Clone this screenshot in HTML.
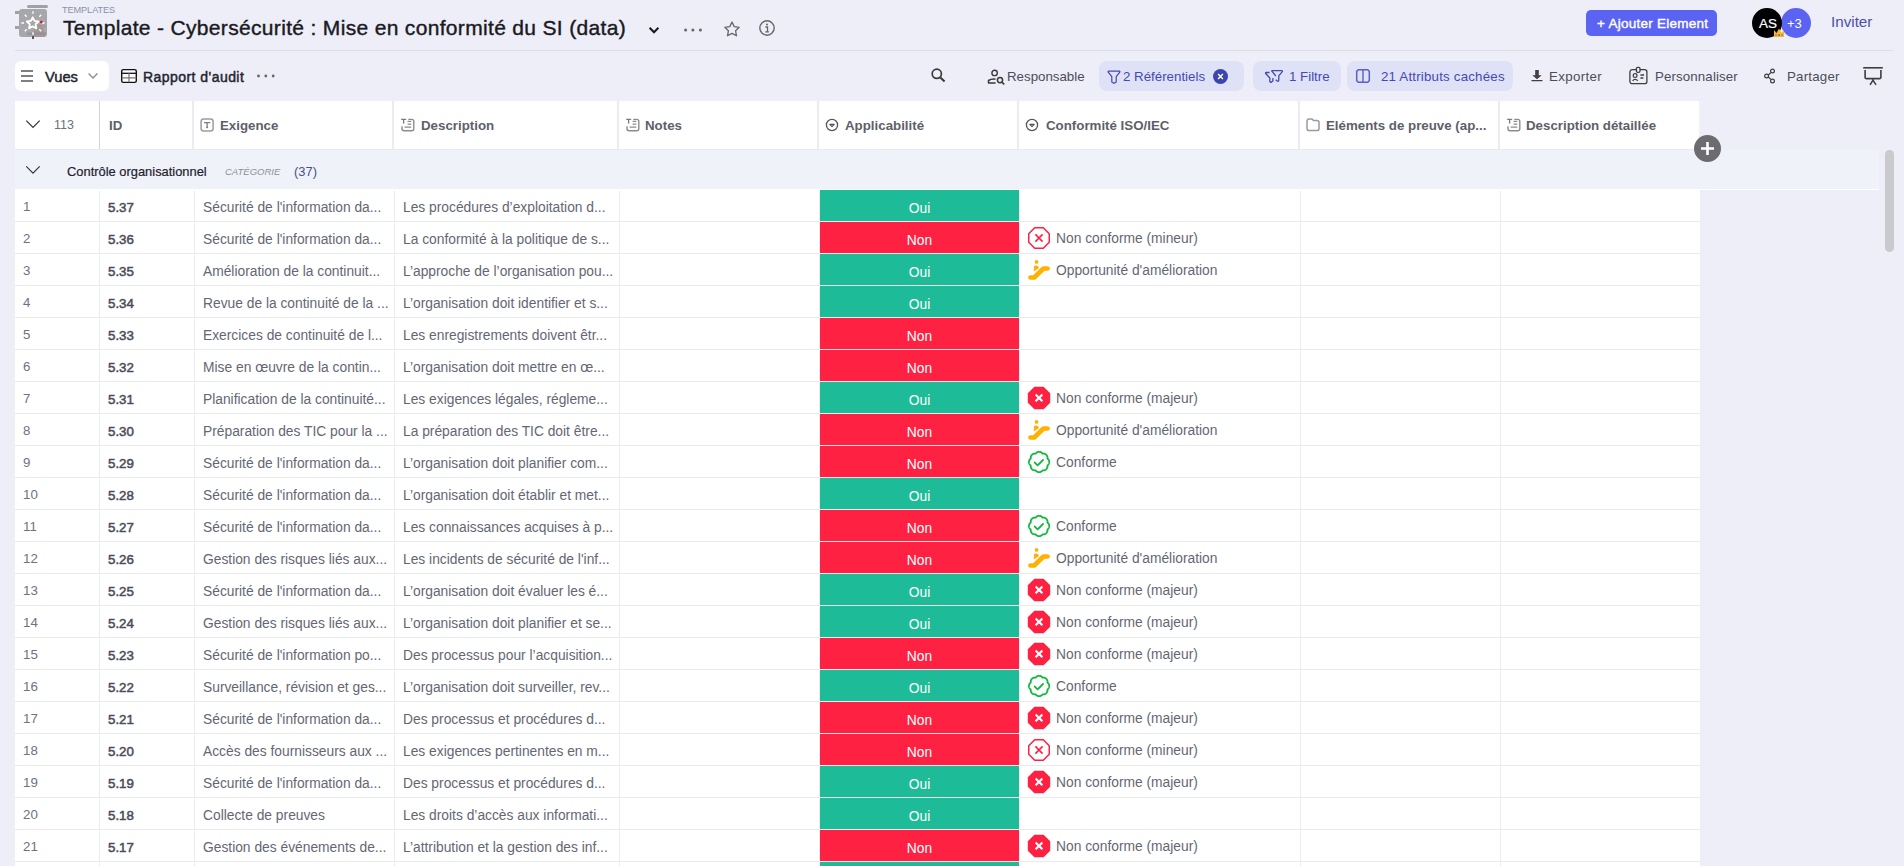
<!DOCTYPE html><html><head><meta charset="utf-8"><style>*{box-sizing:border-box;margin:0;padding:0}
html,body{width:1904px;height:866px;overflow:hidden}
body{background:#eeeef8;position:relative;font-family:"Liberation Sans",sans-serif;color:#1f2130}
.a{position:absolute;white-space:nowrap;line-height:1}
svg{display:block}
.sep{position:absolute;left:15px;top:50px;width:1878px;height:1px;background:#dddde8}
.chip{position:absolute;top:61px;height:30px;background:#dfe1f6;border-radius:8px}
.tb{font-size:13.3px;color:#4b4d58}
.ind{color:#4449b4}
/* table */
.hdr{position:absolute;left:15px;top:101px;width:1686px;height:48px;background:#fff}
.hb{position:absolute;top:101px;height:48px;width:1px;background:#ebebf4}
.hl{font-size:13.3px;font-weight:bold;color:#5d606e;top:120px}
.grp{position:absolute;left:15px;top:150px;width:1864px;height:39px;background:#eff2f8}
.rows{position:absolute;left:0;top:0}
.row{position:absolute;left:15px;width:1685px;height:32px;background:#fff;border-bottom:1px solid #e9e9f3}
.vb{position:absolute;top:190px;height:680px;width:1px;background:#ebebf4}
.c{position:absolute;white-space:nowrap;line-height:1;font-size:13.8px;color:#5e6170;top:10px}
.num{left:9px;font-size:13.3px;color:#6c6f7e}
.id{left:93px;font-weight:bold;font-size:13.3px;color:#44475a}
.ex{left:188px}
.de{left:388px;top:9.3px}
.app{position:absolute;left:805px;top:0;width:199px;height:31px;color:#fff;font-size:13.8px;line-height:32px;text-align:center}
.oui{background:#1dbb98}
.non{background:#ff2142}
.ci{position:absolute;left:1012px;top:4px;width:24px;height:24px}
.cf{left:1041px}

.ab{position:absolute}
.c{top:11px}
.de{top:11.3px}
.app{line-height:38px}
.hl{top:119px}
.num{left:8px}

.title{-webkit-text-stroke:0.4px #1a1a22}
.med{font-weight:normal !important;-webkit-text-stroke:0.45px #22242e}
.wstrip{position:absolute;left:15px;top:189px;width:1864px;height:1px;background:#fff}

.num{top:10px}
.id{top:10.5px}
.c.ex,.c.cf{top:10.6px}
.de{top:10.2px}
.app{line-height:37px}

.id{font-weight:normal;-webkit-text-stroke:0.5px #4a4c58;color:#4a4c58}
.hl{color:#5e5f6a}

.c{color:#646773}
.de{top:10.9px}

.c.num{color:#6e717f}
.c.id{color:#4a4c58}

.c.cf{top:10.1px}

.row{background-color:#fff;background-image:linear-gradient(#ebebf4,#ebebf4),linear-gradient(#ebebf4,#ebebf4),linear-gradient(#ebebf4,#ebebf4),linear-gradient(#ebebf4,#ebebf4),linear-gradient(#ebebf4,#ebebf4),linear-gradient(#ebebf4,#ebebf4),linear-gradient(#ebebf4,#ebebf4),linear-gradient(#ebebf4,#ebebf4),linear-gradient(#ebebf4,#ebebf4);background-position:84px 1px,179px 1px,379px 1px,604px 1px,804px 1px,1004px 1px,1285px 1px,1485px 1px,1685px 1px;background-size:1px 31px;background-repeat:no-repeat}
</style></head><body>
<!-- app icon -->
<div style="position:absolute;left:27px;top:5px;width:21px;height:3px;background:#a0a0a8;border-radius:2px;filter:blur(0.5px)"></div>
<div style="position:absolute;left:15px;top:11px;width:8px;height:2.5px;background:#a0a0a8;filter:blur(0.5px)"></div>
<div style="position:absolute;left:15px;top:26px;width:10px;height:2.5px;background:#a0a0a8;filter:blur(0.5px)"></div>
<div style="position:absolute;left:19px;top:9px;width:28px;height:28px;background:#a6a6ab;border-radius:3px;overflow:hidden">
<svg width="28" height="28" viewBox="0 0 28 28" style="position:absolute;left:0;top:0">
<path d="M17 14c4 0 8 4 9 14H15c-1-4 0-12 2-14z" fill="#a88a80" opacity=".55"/>
<rect x="8" y="23.5" width="19" height="2.5" fill="#8e8e96" opacity=".7"/>
<rect x="10" y="16" width="17" height="2" fill="#9a9aa2" opacity=".6"/>
<path d="M13.7 8.3l1.8 3.6 4 .6-2.9 2.8.7 4-3.6-1.9-3.6 1.9.7-4-2.9-2.8 4-.6z" fill="none" stroke="#fff" stroke-width="1.9" stroke-linejoin="round"/>
<g stroke="#fff" stroke-width="1.4"><path d="M14 2.2v2.6M14 23.2v2.6M2.4 14h2.6M23 14h2.6M5.8 5.8l1.9 1.9M20.3 20.3l1.9 1.9M22.2 5.8l-1.9 1.9M7.7 20.3l-1.9 1.9"/></g>
<circle cx="22.3" cy="13" r="1.3" fill="#d01818"/>
</svg></div>
<div style="position:absolute;left:32px;top:36px;width:2px;height:3px;background:#555;filter:blur(0.4px)"></div>
<div class="a" style="left:62px;top:5.9px;font-size:9.2px;letter-spacing:-0.1px;color:#8a90aa">TEMPLATES</div>
<div class="a title" style="left:63px;top:17.2px;font-size:21px;color:#1a1a22;letter-spacing:0.33px">Template - Cybersécurité : Mise en conformité du SI (data)</div>
<svg class="ab" style="left:646px;top:22px" width="16" height="16" viewBox="0 0 16 16"><path d="M3.6 5.8l4.4 4.5 4.4-4.5" fill="none" stroke="#1a1a1a" stroke-width="2"/></svg>
<svg class="ab" style="left:682px;top:27px" width="22" height="6" viewBox="0 0 22 6"><circle cx="3.6" cy="3" r="1.5" fill="#666"/><circle cx="10.9" cy="3" r="1.5" fill="#666"/><circle cx="18.4" cy="3" r="1.5" fill="#666"/></svg>
<svg class="ab" style="left:722px;top:20px" width="20" height="18" viewBox="0 0 20 18"><path d="M10 2l2.2 4.6 5 .7-3.6 3.5.9 5-4.5-2.4-4.5 2.4.9-5L2.8 7.3l5-.7z" fill="none" stroke="#666" stroke-width="1.3" stroke-linejoin="round"/></svg>
<svg class="ab" style="left:758px;top:19px" width="18" height="18" viewBox="0 0 18 18"><circle cx="9" cy="9" r="7.2" fill="none" stroke="#666" stroke-width="1.4"/><circle cx="9" cy="5.6" r="1" fill="#666"/><path d="M7.4 8h2.1v4.6M7.3 12.8h3.6" fill="none" stroke="#666" stroke-width="1.3"/></svg>
<div class="sep"></div>
<!-- top right -->
<div style="position:absolute;left:1586px;top:10px;width:131px;height:26px;background:#5b63f2;border-radius:5px"></div>
<div class="a" style="left:1597px;top:16.5px;font-size:13.5px;letter-spacing:0.25px;color:#fff;-webkit-text-stroke:0.4px #fff">+ Ajouter Element</div>
<div style="position:absolute;left:1781px;top:8px;width:30px;height:30px;background:#5b63f2;border-radius:50%"></div>
<div style="position:absolute;left:1752px;top:8px;width:30px;height:30px;background:#000;border-radius:50%"></div>
<div class="a" style="left:1759px;top:17px;font-size:13.5px;color:#fff;-webkit-text-stroke:0.2px #fff">AS</div>
<div class="a" style="left:1787px;top:17px;font-size:13px;color:#fff">+3</div>
<svg class="ab" style="left:1773px;top:27px;z-index:3" width="12" height="11" viewBox="0 0 12 11"><path d="M1 3l2.5 3L6 1.5 8.5 6 11 3v7H1z" fill="#f5b82e"/><circle cx="6" cy="8" r="1" fill="#2a9d4a"/><circle cx="3" cy="8" r=".8" fill="#c03cc0"/><circle cx="9" cy="8" r=".8" fill="#c03cc0"/></svg>
<div class="a" style="left:1831px;top:14px;font-size:15.2px;color:#4a50a8">Inviter</div>
<!-- toolbar -->
<div style="position:absolute;left:15px;top:61px;width:94px;height:30px;background:#fff;border-radius:6px"></div>
<svg class="ab" style="left:20px;top:69px" width="14" height="14" viewBox="0 0 14 14"><path d="M1 2h12M1 7h12M1 12h12" stroke="#555" stroke-width="1.4"/></svg>
<div class="a med" style="left:45px;top:70px;font-size:14.7px;color:#22242e">Vues</div>
<svg class="ab" style="left:87px;top:71px" width="12" height="10" viewBox="0 0 12 10"><path d="M1.6 2.6l4.4 4.4 4.4-4.4" fill="none" stroke="#8a8d9c" stroke-width="1.4"/></svg>
<svg class="ab" style="left:120px;top:68px" width="18" height="16" viewBox="0 0 18 16"><rect x="1.7" y="1.6" width="14.6" height="12.8" rx="1.6" fill="#fff" stroke="#111" stroke-width="1.4"/><path d="M1.7 5.3h14.6" stroke="#111" stroke-width="1.3"/><path d="M9 5.3v9M1.7 9.8h14.6" stroke="#777" stroke-width="1.2"/></svg>
<div class="a med" style="left:143px;top:70px;font-size:14px;letter-spacing:0.45px;color:#22242e">Rapport d'audit</div>
<svg class="ab" style="left:256px;top:73px" width="20" height="6" viewBox="0 0 20 6"><circle cx="2.5" cy="3" r="1.4" fill="#666"/><circle cx="9.8" cy="3" r="1.4" fill="#666"/><circle cx="17.2" cy="3" r="1.4" fill="#666"/></svg>
<svg class="ab" style="left:929px;top:67px" width="18" height="18" viewBox="0 0 18 18"><circle cx="7.8" cy="6.8" r="4.6" fill="none" stroke="#3a3a3a" stroke-width="1.7"/><path d="M11.3 10.5l4.3 4" stroke="#3a3a3a" stroke-width="2.1"/></svg>
<svg class="ab" style="left:986px;top:68px" width="20" height="18" viewBox="0 0 20 18"><circle cx="8.6" cy="4.9" r="2.7" fill="none" stroke="#3a3a3a" stroke-width="1.4"/><path d="M9.5 11.2c-2.8-.3-5.6.4-7 1.3v2.5H9.6" fill="none" stroke="#3a3a3a" stroke-width="1.5" stroke-linejoin="round"/><circle cx="14" cy="12.1" r="2.6" fill="none" stroke="#3a3a3a" stroke-width="1.5"/><path d="M15.9 14.2l2.4 2.3" stroke="#3a3a3a" stroke-width="1.7"/></svg>
<div class="a tb" style="left:1007px;top:69.7px">Responsable</div>
<div class="chip" style="left:1099px;width:145px"></div>
<svg class="ab" style="left:1107px;top:69px" width="14" height="15" viewBox="0 0 14 15"><path d="M1.6 2.2h10.8c.5 0 .7.5.4.9L9.2 7.7v5.2l-1.6 1.2H6.4l-1.6-1.2V7.7L1.2 3.1c-.3-.4-.1-.9.4-.9z" fill="none" stroke="#4449b4" stroke-width="1.2" stroke-linejoin="round"/></svg>
<div class="a tb ind" style="left:1123px;top:69.7px">2 Référentiels</div>
<svg class="ab" style="left:1212px;top:68px" width="17" height="17" viewBox="0 0 17 17"><circle cx="8.5" cy="8.5" r="7.5" fill="#3c44b0"/><path d="M6.1 6.1l4.8 4.8M10.9 6.1l-4.8 4.8" stroke="#fff" stroke-width="1.4"/></svg>
<div class="chip" style="left:1253px;width:88px"></div>
<svg class="ab" style="left:1264px;top:68px" width="20" height="16" viewBox="0 0 20 16"><path d="M7.5 2.6h10.3c.6 0 .8.6.5 1l-3.5 4.3v4.5c0 .8-.9 1.2-1.5.7l-1.6-1.3" fill="none" stroke="#4449b4" stroke-width="1.3" stroke-linejoin="round"/><path d="M7.5 2.6l4.3 5.4M5.5 4.5H2.2c-.6 0-.8.6-.5 1L5.8 10v3.3c0 .8.8 1.2 1.5.8l1.6-1.1V10" fill="none" stroke="#4449b4" stroke-width="1.3" stroke-linejoin="round"/></svg>
<div class="a tb ind" style="left:1289px;top:69.7px">1 Filtre</div>
<div class="chip" style="left:1347px;width:166px"></div>
<svg class="ab" style="left:1355px;top:68px" width="16" height="16" viewBox="0 0 16 16"><path d="M3.3 1.8h9.4l1.6 1.6v9.2l-1.6 1.6H3.3l-1.6-1.6V3.4z" fill="none" stroke="#5a60c4" stroke-width="1.5"/><path d="M8 1.8v12.4" stroke="#5a60c4" stroke-width="1.4"/></svg>
<div class="a tb ind" style="left:1381px;top:69.7px;letter-spacing:0.2px">21 Attributs cachées</div>
<svg class="ab" style="left:1531px;top:69px" width="12" height="13" viewBox="0 0 12 13"><path d="M4.2 1h3.6v5.2h2.9L6 10.2 1.3 6.2h2.9z" fill="#404040"/><path d="M1 11.6h10" stroke="#404040" stroke-width="1.4" stroke-linecap="round"/></svg>
<div class="a tb" style="left:1549px;top:69.7px;letter-spacing:0.35px">Exporter</div>
<svg class="ab" style="left:1628px;top:66px" width="20" height="19" viewBox="0 0 20 19"><rect x="1.9" y="3.7" width="17" height="14" rx="2.2" fill="none" stroke="#3e3e3e" stroke-width="1.3"/><rect x="8.4" y="1.3" width="3.6" height="5" rx="1.3" fill="#eeeef8" stroke="#3e3e3e" stroke-width="1.3"/><circle cx="7.1" cy="9.6" r="1.9" fill="none" stroke="#3e3e3e" stroke-width="1.2"/><path d="M4.6 14.8c1.2-1.8 3.9-1.8 5.1 0" fill="none" stroke="#3e3e3e" stroke-width="1.2"/><path d="M12.4 9h3.7M12.4 12h3" stroke="#3e3e3e" stroke-width="1.3"/></svg>
<div class="a tb" style="left:1655px;top:69.7px;letter-spacing:0.12px">Personnaliser</div>
<svg class="ab" style="left:1763px;top:67px" width="14" height="18" viewBox="0 0 14 18"><circle cx="9.5" cy="4" r="1.9" fill="none" stroke="#3e3e3e" stroke-width="1.2"/><circle cx="3.6" cy="9" r="1.9" fill="none" stroke="#3e3e3e" stroke-width="1.2"/><circle cx="9.5" cy="14" r="1.9" fill="none" stroke="#3e3e3e" stroke-width="1.2"/><path d="M5.3 8l2.6-2.4M5.3 10l2.6 2.4" stroke="#3e3e3e" stroke-width="1.2"/></svg>
<div class="a tb" style="left:1787px;top:69.7px;letter-spacing:0.2px">Partager</div>
<svg class="ab" style="left:1862px;top:66px" width="22" height="20" viewBox="0 0 22 20"><path d="M1.2 1.8h19.6" stroke="#3e3e3e" stroke-width="1.6"/><path d="M3.1 4v7.6c0 .6.4 1 1 1h13.8c.6 0 1-.4 1-1V4" fill="none" stroke="#3e3e3e" stroke-width="1.6"/><path d="M11 12.6v1.6L8 18.8M11 14.2l3 4.6" fill="none" stroke="#3e3e3e" stroke-width="1.5"/></svg>
<!-- header -->
<div class="hdr"></div>
<div class="hb" style="left:99px;background:#d3d3da"></div>
<div class="hb" style="left:192px;width:2px"></div>
<div class="hb" style="left:392px;width:2px"></div>
<div class="hb" style="left:617px;width:2px"></div>
<div class="hb" style="left:817px;width:2px"></div>
<div class="hb" style="left:1017px;width:2px"></div>
<div class="hb" style="left:1298px;width:2px"></div>
<div class="hb" style="left:1498px;width:2px"></div>
<div class="hb" style="left:1699px;width:2px;background:#f0f0f8"></div><div style="position:absolute;left:15px;top:149px;width:1686px;height:1px;background:#e9e9f4"></div>
<svg class="ab" style="left:25px;top:117px" width="16" height="14" viewBox="0 0 16 14"><path d="M1.3 3.6L8 10.3l6.7-6.7" fill="none" stroke="#333" stroke-width="1.2"/></svg>
<div class="a" style="left:54px;top:119px;font-size:12.5px;color:#6c6f7e">113</div>
<div class="a hl" style="left:109px">ID</div>
<svg class="ab" style="left:199px;top:117px" width="16" height="16" viewBox="0 0 16 16"><rect x="2.1" y="2.1" width="12" height="12" rx="2.5" fill="none" stroke="#9c9ca2" stroke-width="1.5"/><path d="M5.6 6.3V5.6h5v.7M8.1 5.6v5" fill="none" stroke="#7b7b80" stroke-width="1.3"/><path d="M7.1 10.6h2" stroke="#7b7b80" stroke-width="1.1"/></svg>
<div class="a hl" style="left:220px">Exigence</div>
<svg class="ab" style="left:400px;top:117px" width="16" height="16" viewBox="0 0 16 16"><path d="M1.5 2.6V2.4h4.3v.2M3.6 2.4v3.6M2.9 6h1.4" fill="none" stroke="#777" stroke-width="1.2"/><path d="M8.3 2.4h3.5c1.1 0 2 .9 2 2V11.7c0 1.1-.9 2-2 2H4c-1.1 0-2-.9-2-2V9.3" fill="none" stroke="#8c8c90" stroke-width="1.4"/><path d="M7.6 4.4h3.7M7.6 7.1h3.7M4.6 10.2h6.7" stroke="#8c8c90" stroke-width="1.2"/></svg>
<div class="a hl" style="left:421px">Description</div>
<svg class="ab" style="left:625px;top:117px" width="16" height="16" viewBox="0 0 16 16"><path d="M1.5 2.6V2.4h4.3v.2M3.6 2.4v3.6M2.9 6h1.4" fill="none" stroke="#777" stroke-width="1.2"/><path d="M8.3 2.4h3.5c1.1 0 2 .9 2 2V11.7c0 1.1-.9 2-2 2H4c-1.1 0-2-.9-2-2V9.3" fill="none" stroke="#8c8c90" stroke-width="1.4"/><path d="M7.6 4.4h3.7M7.6 7.1h3.7M4.6 10.2h6.7" stroke="#8c8c90" stroke-width="1.2"/></svg>
<div class="a hl" style="left:645px">Notes</div>
<svg class="ab" style="left:824px;top:117px" width="16" height="16" viewBox="0 0 16 16"><circle cx="8" cy="8" r="5.6" fill="none" stroke="#555" stroke-width="1.3"/><path d="M5.8 7.4h4.4L8 9.6z" fill="none" stroke="#555" stroke-width="1.2" stroke-linejoin="round"/></svg>
<div class="a hl" style="left:845px">Applicabilité</div>
<svg class="ab" style="left:1024px;top:117px" width="16" height="16" viewBox="0 0 16 16"><circle cx="8" cy="8" r="5.6" fill="none" stroke="#555" stroke-width="1.3"/><path d="M5.8 7.4h4.4L8 9.6z" fill="none" stroke="#555" stroke-width="1.2" stroke-linejoin="round"/></svg>
<div class="a hl" style="left:1046px">Conformité ISO/IEC</div>
<svg class="ab" style="left:1305px;top:117px" width="16" height="16" viewBox="0 0 16 16"><path d="M2 4.3c0-1.2.9-2.2 2.1-2.2h2.3c.8 0 1.3.4 1.7 1.1l.3.4h3.5c1.2 0 2.1.9 2.1 2.1v5.8c0 1.2-.9 2.1-2.1 2.1H4.1C2.9 13.6 2 12.7 2 11.5z" fill="none" stroke="#9a9a9e" stroke-width="1.5"/></svg>
<div class="a hl" style="left:1326px">Eléments de preuve (ap...</div>
<svg class="ab" style="left:1506px;top:117px" width="16" height="16" viewBox="0 0 16 16"><path d="M1.5 2.6V2.4h4.3v.2M3.6 2.4v3.6M2.9 6h1.4" fill="none" stroke="#777" stroke-width="1.2"/><path d="M8.3 2.4h3.5c1.1 0 2 .9 2 2V11.7c0 1.1-.9 2-2 2H4c-1.1 0-2-.9-2-2V9.3" fill="none" stroke="#8c8c90" stroke-width="1.4"/><path d="M7.6 4.4h3.7M7.6 7.1h3.7M4.6 10.2h6.7" stroke="#8c8c90" stroke-width="1.2"/></svg>
<div class="a hl" style="left:1526px">Description détaillée</div>
<!-- group row -->
<div class="grp"></div><div class="wstrip"></div>
<svg class="ab" style="left:25px;top:163px" width="16" height="14" viewBox="0 0 16 14"><path d="M1.3 3.4L8 10.1l6.7-6.7" fill="none" stroke="#333" stroke-width="1.2"/></svg>
<div class="a" style="left:67px;top:165.5px;font-size:12.9px;color:#1f2130;-webkit-text-stroke:0.2px #1f2130">Contrôle organisationnel</div>
<div class="a" style="left:225px;top:166.5px;font-size:9.5px;font-style:italic;color:#8c8f9c">CATÉGORIE</div>
<div class="a" style="left:294px;top:165.5px;font-size:12.9px;color:#4a4f8a">(37)</div>
<!-- plus and scrollbar -->
<div style="position:absolute;left:1694px;top:135px;width:27px;height:27px;border-radius:50%;background:#6b6b70;z-index:5"></div>
<svg class="ab" style="left:1694px;top:135px;z-index:6" width="27" height="27" viewBox="0 0 27 27"><path d="M13.5 7v13M7 13.5h13" stroke="#fff" stroke-width="2.6"/></svg>
<div style="position:absolute;left:1885px;top:150px;width:9px;height:102px;border-radius:5px;background:#c9c9ce"></div>

<div class="rows">
<div class="row" style="top:190px"><span class="c num">1</span><span class="c id">5.37</span><span class="c ex">Sécurité de l'information da...</span><span class="c de">Les procédures d’exploitation d...</span><span class="app oui">Oui</span></div>
<div class="row" style="top:222px"><span class="c num">2</span><span class="c id">5.36</span><span class="c ex">Sécurité de l'information da...</span><span class="c de">La conformité à la politique de s...</span><span class="app non">Non</span><span class="ci"><svg width="24" height="24" viewBox="0 0 24 24"><path d="M7.75 1.75h8.5l6 6v8.5l-6 6h-8.5l-6-6v-8.5z" fill="none" stroke="#ff2142" stroke-width="1.5"/><path d="M8.4 8.4l7.2 7.2M15.6 8.4l-7.2 7.2" stroke="#ff2142" stroke-width="1.6"/></svg></span><span class="c cf">Non conforme (mineur)</span></div>
<div class="row" style="top:254px"><span class="c num">3</span><span class="c id">5.35</span><span class="c ex">Amélioration de la continuit...</span><span class="c de">L’approche de l’organisation pou...</span><span class="app oui">Oui</span><span class="ci"><svg width="24" height="24" viewBox="0 0 24 24"><circle cx="9.6" cy="3.9" r="1.85" fill="#ffb000"/><path d="M6.9 13.6V8.9C6.9 7.9 7.9 7.3 8.9 7.4 10.6 7.6 11.9 8.6 11.9 9.9z" fill="#ffb000"/><path d="M3.4 19.5h3.8l9.3-9h4.1" fill="none" stroke="#ffb000" stroke-width="4.6" stroke-linecap="round" stroke-linejoin="round"/></svg></span><span class="c cf">Opportunité d'amélioration</span></div>
<div class="row" style="top:286px"><span class="c num">4</span><span class="c id">5.34</span><span class="c ex">Revue de la continuité de la ...</span><span class="c de">L’organisation doit identifier et s...</span><span class="app oui">Oui</span></div>
<div class="row" style="top:318px"><span class="c num">5</span><span class="c id">5.33</span><span class="c ex">Exercices de continuité de l...</span><span class="c de">Les enregistrements doivent êtr...</span><span class="app non">Non</span></div>
<div class="row" style="top:350px"><span class="c num">6</span><span class="c id">5.32</span><span class="c ex">Mise en œuvre de la contin...</span><span class="c de">L’organisation doit mettre en œ...</span><span class="app non">Non</span></div>
<div class="row" style="top:382px"><span class="c num">7</span><span class="c id">5.31</span><span class="c ex">Planification de la continuité...</span><span class="c de">Les exigences légales, régleme...</span><span class="app oui">Oui</span><span class="ci"><svg width="24" height="24" viewBox="0 0 24 24"><path d="M7.36 0.8h9.28l6.56 6.56v9.28l-6.56 6.56h-9.28l-6.56-6.56v-9.28z" fill="#ff2142"/><path d="M8.6 8.5l6.8 6.8M15.4 8.5l-6.8 6.8" stroke="#fff" stroke-width="2.1"/></svg></span><span class="c cf">Non conforme (majeur)</span></div>
<div class="row" style="top:414px"><span class="c num">8</span><span class="c id">5.30</span><span class="c ex">Préparation des TIC pour la ...</span><span class="c de">La préparation des TIC doit être...</span><span class="app non">Non</span><span class="ci"><svg width="24" height="24" viewBox="0 0 24 24"><circle cx="9.6" cy="3.9" r="1.85" fill="#ffb000"/><path d="M6.9 13.6V8.9C6.9 7.9 7.9 7.3 8.9 7.4 10.6 7.6 11.9 8.6 11.9 9.9z" fill="#ffb000"/><path d="M3.4 19.5h3.8l9.3-9h4.1" fill="none" stroke="#ffb000" stroke-width="4.6" stroke-linecap="round" stroke-linejoin="round"/></svg></span><span class="c cf">Opportunité d'amélioration</span></div>
<div class="row" style="top:446px"><span class="c num">9</span><span class="c id">5.29</span><span class="c ex">Sécurité de l'information da...</span><span class="c de">L’organisation doit planifier com...</span><span class="app non">Non</span><span class="ci"><svg width="24" height="24" viewBox="0 0 24 24"><path d="M22.25,12.00 L22.24,12.27 L22.22,12.53 L22.17,12.79 L22.11,13.05 L22.04,13.31 L21.95,13.56 L21.84,13.81 L21.72,14.04 L21.58,14.28 L21.43,14.50 L21.27,14.72 L21.09,14.92 L20.89,15.11 L20.68,15.29 L20.41,15.44 L20.49,15.74 L20.52,16.02 L20.52,16.29 L20.50,16.56 L20.47,16.83 L20.41,17.10 L20.35,17.36 L20.26,17.61 L20.17,17.86 L20.05,18.10 L19.93,18.34 L19.78,18.56 L19.63,18.78 L19.46,18.98 L19.28,19.18 L19.08,19.36 L18.88,19.53 L18.66,19.68 L18.44,19.83 L18.20,19.95 L17.96,20.07 L17.71,20.16 L17.46,20.25 L17.20,20.31 L16.93,20.37 L16.66,20.40 L16.39,20.42 L16.12,20.42 L15.84,20.39 L15.54,20.31 L15.39,20.58 L15.21,20.79 L15.02,20.99 L14.82,21.17 L14.60,21.33 L14.38,21.48 L14.14,21.62 L13.91,21.74 L13.66,21.85 L13.41,21.94 L13.15,22.01 L12.89,22.07 L12.63,22.12 L12.37,22.14 L12.10,22.15 L11.83,22.14 L11.57,22.12 L11.31,22.07 L11.05,22.01 L10.79,21.94 L10.54,21.85 L10.29,21.74 L10.06,21.62 L9.82,21.48 L9.60,21.33 L9.38,21.17 L9.18,20.99 L8.99,20.79 L8.81,20.58 L8.66,20.31 L8.36,20.39 L8.08,20.42 L7.81,20.42 L7.54,20.40 L7.27,20.37 L7.00,20.31 L6.74,20.25 L6.49,20.16 L6.24,20.07 L6.00,19.95 L5.76,19.83 L5.54,19.68 L5.32,19.53 L5.12,19.36 L4.92,19.18 L4.74,18.98 L4.57,18.78 L4.42,18.56 L4.27,18.34 L4.15,18.10 L4.03,17.86 L3.94,17.61 L3.85,17.36 L3.79,17.10 L3.73,16.83 L3.70,16.56 L3.68,16.29 L3.68,16.02 L3.71,15.74 L3.79,15.44 L3.52,15.29 L3.31,15.11 L3.11,14.92 L2.93,14.72 L2.77,14.50 L2.62,14.28 L2.48,14.04 L2.36,13.81 L2.25,13.56 L2.16,13.31 L2.09,13.05 L2.03,12.79 L1.98,12.53 L1.96,12.27 L1.95,12.00 L1.96,11.73 L1.98,11.47 L2.03,11.21 L2.09,10.95 L2.16,10.69 L2.25,10.44 L2.36,10.19 L2.48,9.96 L2.62,9.72 L2.77,9.50 L2.93,9.28 L3.11,9.08 L3.31,8.89 L3.52,8.71 L3.79,8.56 L3.71,8.26 L3.68,7.98 L3.68,7.71 L3.70,7.44 L3.73,7.17 L3.79,6.90 L3.85,6.64 L3.94,6.39 L4.03,6.14 L4.15,5.90 L4.27,5.66 L4.42,5.44 L4.57,5.22 L4.74,5.02 L4.92,4.82 L5.12,4.64 L5.32,4.47 L5.54,4.32 L5.76,4.17 L6.00,4.05 L6.24,3.93 L6.49,3.84 L6.74,3.75 L7.00,3.69 L7.27,3.63 L7.54,3.60 L7.81,3.58 L8.08,3.58 L8.36,3.61 L8.66,3.69 L8.81,3.42 L8.99,3.21 L9.18,3.01 L9.38,2.83 L9.60,2.67 L9.82,2.52 L10.06,2.38 L10.29,2.26 L10.54,2.15 L10.79,2.06 L11.05,1.99 L11.31,1.93 L11.57,1.88 L11.83,1.86 L12.10,1.85 L12.37,1.86 L12.63,1.88 L12.89,1.93 L13.15,1.99 L13.41,2.06 L13.66,2.15 L13.91,2.26 L14.14,2.38 L14.38,2.52 L14.60,2.67 L14.82,2.83 L15.02,3.01 L15.21,3.21 L15.39,3.42 L15.54,3.69 L15.84,3.61 L16.12,3.58 L16.39,3.58 L16.66,3.60 L16.93,3.63 L17.20,3.69 L17.46,3.75 L17.71,3.84 L17.96,3.93 L18.20,4.05 L18.44,4.17 L18.66,4.32 L18.88,4.47 L19.08,4.64 L19.28,4.82 L19.46,5.02 L19.63,5.22 L19.78,5.44 L19.93,5.66 L20.05,5.90 L20.17,6.14 L20.26,6.39 L20.35,6.64 L20.41,6.90 L20.47,7.17 L20.50,7.44 L20.52,7.71 L20.52,7.98 L20.49,8.26 L20.41,8.56 L20.68,8.71 L20.89,8.89 L21.09,9.08 L21.27,9.28 L21.43,9.50 L21.58,9.72 L21.72,9.96 L21.84,10.19 L21.95,10.44 L22.04,10.69 L22.11,10.95 L22.17,11.21 L22.22,11.47 L22.24,11.73Z" fill="none" stroke="#12b83e" stroke-width="1.8" stroke-linejoin="round"/><path d="M7.6 12.4l3 3 5.4-5.4" fill="none" stroke="#12b83e" stroke-width="1.8" stroke-linecap="round" stroke-linejoin="round"/></svg></span><span class="c cf">Conforme</span></div>
<div class="row" style="top:478px"><span class="c num">10</span><span class="c id">5.28</span><span class="c ex">Sécurité de l'information da...</span><span class="c de">L’organisation doit établir et met...</span><span class="app oui">Oui</span></div>
<div class="row" style="top:510px"><span class="c num">11</span><span class="c id">5.27</span><span class="c ex">Sécurité de l'information da...</span><span class="c de">Les connaissances acquises à p...</span><span class="app non">Non</span><span class="ci"><svg width="24" height="24" viewBox="0 0 24 24"><path d="M22.25,12.00 L22.24,12.27 L22.22,12.53 L22.17,12.79 L22.11,13.05 L22.04,13.31 L21.95,13.56 L21.84,13.81 L21.72,14.04 L21.58,14.28 L21.43,14.50 L21.27,14.72 L21.09,14.92 L20.89,15.11 L20.68,15.29 L20.41,15.44 L20.49,15.74 L20.52,16.02 L20.52,16.29 L20.50,16.56 L20.47,16.83 L20.41,17.10 L20.35,17.36 L20.26,17.61 L20.17,17.86 L20.05,18.10 L19.93,18.34 L19.78,18.56 L19.63,18.78 L19.46,18.98 L19.28,19.18 L19.08,19.36 L18.88,19.53 L18.66,19.68 L18.44,19.83 L18.20,19.95 L17.96,20.07 L17.71,20.16 L17.46,20.25 L17.20,20.31 L16.93,20.37 L16.66,20.40 L16.39,20.42 L16.12,20.42 L15.84,20.39 L15.54,20.31 L15.39,20.58 L15.21,20.79 L15.02,20.99 L14.82,21.17 L14.60,21.33 L14.38,21.48 L14.14,21.62 L13.91,21.74 L13.66,21.85 L13.41,21.94 L13.15,22.01 L12.89,22.07 L12.63,22.12 L12.37,22.14 L12.10,22.15 L11.83,22.14 L11.57,22.12 L11.31,22.07 L11.05,22.01 L10.79,21.94 L10.54,21.85 L10.29,21.74 L10.06,21.62 L9.82,21.48 L9.60,21.33 L9.38,21.17 L9.18,20.99 L8.99,20.79 L8.81,20.58 L8.66,20.31 L8.36,20.39 L8.08,20.42 L7.81,20.42 L7.54,20.40 L7.27,20.37 L7.00,20.31 L6.74,20.25 L6.49,20.16 L6.24,20.07 L6.00,19.95 L5.76,19.83 L5.54,19.68 L5.32,19.53 L5.12,19.36 L4.92,19.18 L4.74,18.98 L4.57,18.78 L4.42,18.56 L4.27,18.34 L4.15,18.10 L4.03,17.86 L3.94,17.61 L3.85,17.36 L3.79,17.10 L3.73,16.83 L3.70,16.56 L3.68,16.29 L3.68,16.02 L3.71,15.74 L3.79,15.44 L3.52,15.29 L3.31,15.11 L3.11,14.92 L2.93,14.72 L2.77,14.50 L2.62,14.28 L2.48,14.04 L2.36,13.81 L2.25,13.56 L2.16,13.31 L2.09,13.05 L2.03,12.79 L1.98,12.53 L1.96,12.27 L1.95,12.00 L1.96,11.73 L1.98,11.47 L2.03,11.21 L2.09,10.95 L2.16,10.69 L2.25,10.44 L2.36,10.19 L2.48,9.96 L2.62,9.72 L2.77,9.50 L2.93,9.28 L3.11,9.08 L3.31,8.89 L3.52,8.71 L3.79,8.56 L3.71,8.26 L3.68,7.98 L3.68,7.71 L3.70,7.44 L3.73,7.17 L3.79,6.90 L3.85,6.64 L3.94,6.39 L4.03,6.14 L4.15,5.90 L4.27,5.66 L4.42,5.44 L4.57,5.22 L4.74,5.02 L4.92,4.82 L5.12,4.64 L5.32,4.47 L5.54,4.32 L5.76,4.17 L6.00,4.05 L6.24,3.93 L6.49,3.84 L6.74,3.75 L7.00,3.69 L7.27,3.63 L7.54,3.60 L7.81,3.58 L8.08,3.58 L8.36,3.61 L8.66,3.69 L8.81,3.42 L8.99,3.21 L9.18,3.01 L9.38,2.83 L9.60,2.67 L9.82,2.52 L10.06,2.38 L10.29,2.26 L10.54,2.15 L10.79,2.06 L11.05,1.99 L11.31,1.93 L11.57,1.88 L11.83,1.86 L12.10,1.85 L12.37,1.86 L12.63,1.88 L12.89,1.93 L13.15,1.99 L13.41,2.06 L13.66,2.15 L13.91,2.26 L14.14,2.38 L14.38,2.52 L14.60,2.67 L14.82,2.83 L15.02,3.01 L15.21,3.21 L15.39,3.42 L15.54,3.69 L15.84,3.61 L16.12,3.58 L16.39,3.58 L16.66,3.60 L16.93,3.63 L17.20,3.69 L17.46,3.75 L17.71,3.84 L17.96,3.93 L18.20,4.05 L18.44,4.17 L18.66,4.32 L18.88,4.47 L19.08,4.64 L19.28,4.82 L19.46,5.02 L19.63,5.22 L19.78,5.44 L19.93,5.66 L20.05,5.90 L20.17,6.14 L20.26,6.39 L20.35,6.64 L20.41,6.90 L20.47,7.17 L20.50,7.44 L20.52,7.71 L20.52,7.98 L20.49,8.26 L20.41,8.56 L20.68,8.71 L20.89,8.89 L21.09,9.08 L21.27,9.28 L21.43,9.50 L21.58,9.72 L21.72,9.96 L21.84,10.19 L21.95,10.44 L22.04,10.69 L22.11,10.95 L22.17,11.21 L22.22,11.47 L22.24,11.73Z" fill="none" stroke="#12b83e" stroke-width="1.8" stroke-linejoin="round"/><path d="M7.6 12.4l3 3 5.4-5.4" fill="none" stroke="#12b83e" stroke-width="1.8" stroke-linecap="round" stroke-linejoin="round"/></svg></span><span class="c cf">Conforme</span></div>
<div class="row" style="top:542px"><span class="c num">12</span><span class="c id">5.26</span><span class="c ex">Gestion des risques liés aux...</span><span class="c de">Les incidents de sécurité de l'inf...</span><span class="app non">Non</span><span class="ci"><svg width="24" height="24" viewBox="0 0 24 24"><circle cx="9.6" cy="3.9" r="1.85" fill="#ffb000"/><path d="M6.9 13.6V8.9C6.9 7.9 7.9 7.3 8.9 7.4 10.6 7.6 11.9 8.6 11.9 9.9z" fill="#ffb000"/><path d="M3.4 19.5h3.8l9.3-9h4.1" fill="none" stroke="#ffb000" stroke-width="4.6" stroke-linecap="round" stroke-linejoin="round"/></svg></span><span class="c cf">Opportunité d'amélioration</span></div>
<div class="row" style="top:574px"><span class="c num">13</span><span class="c id">5.25</span><span class="c ex">Sécurité de l'information da...</span><span class="c de">L’organisation doit évaluer les é...</span><span class="app oui">Oui</span><span class="ci"><svg width="24" height="24" viewBox="0 0 24 24"><path d="M7.36 0.8h9.28l6.56 6.56v9.28l-6.56 6.56h-9.28l-6.56-6.56v-9.28z" fill="#ff2142"/><path d="M8.6 8.5l6.8 6.8M15.4 8.5l-6.8 6.8" stroke="#fff" stroke-width="2.1"/></svg></span><span class="c cf">Non conforme (majeur)</span></div>
<div class="row" style="top:606px"><span class="c num">14</span><span class="c id">5.24</span><span class="c ex">Gestion des risques liés aux...</span><span class="c de">L’organisation doit planifier et se...</span><span class="app oui">Oui</span><span class="ci"><svg width="24" height="24" viewBox="0 0 24 24"><path d="M7.36 0.8h9.28l6.56 6.56v9.28l-6.56 6.56h-9.28l-6.56-6.56v-9.28z" fill="#ff2142"/><path d="M8.6 8.5l6.8 6.8M15.4 8.5l-6.8 6.8" stroke="#fff" stroke-width="2.1"/></svg></span><span class="c cf">Non conforme (majeur)</span></div>
<div class="row" style="top:638px"><span class="c num">15</span><span class="c id">5.23</span><span class="c ex">Sécurité de l'information po...</span><span class="c de">Des processus pour l’acquisition...</span><span class="app non">Non</span><span class="ci"><svg width="24" height="24" viewBox="0 0 24 24"><path d="M7.36 0.8h9.28l6.56 6.56v9.28l-6.56 6.56h-9.28l-6.56-6.56v-9.28z" fill="#ff2142"/><path d="M8.6 8.5l6.8 6.8M15.4 8.5l-6.8 6.8" stroke="#fff" stroke-width="2.1"/></svg></span><span class="c cf">Non conforme (majeur)</span></div>
<div class="row" style="top:670px"><span class="c num">16</span><span class="c id">5.22</span><span class="c ex">Surveillance, révision et ges...</span><span class="c de">L’organisation doit surveiller, rev...</span><span class="app oui">Oui</span><span class="ci"><svg width="24" height="24" viewBox="0 0 24 24"><path d="M22.25,12.00 L22.24,12.27 L22.22,12.53 L22.17,12.79 L22.11,13.05 L22.04,13.31 L21.95,13.56 L21.84,13.81 L21.72,14.04 L21.58,14.28 L21.43,14.50 L21.27,14.72 L21.09,14.92 L20.89,15.11 L20.68,15.29 L20.41,15.44 L20.49,15.74 L20.52,16.02 L20.52,16.29 L20.50,16.56 L20.47,16.83 L20.41,17.10 L20.35,17.36 L20.26,17.61 L20.17,17.86 L20.05,18.10 L19.93,18.34 L19.78,18.56 L19.63,18.78 L19.46,18.98 L19.28,19.18 L19.08,19.36 L18.88,19.53 L18.66,19.68 L18.44,19.83 L18.20,19.95 L17.96,20.07 L17.71,20.16 L17.46,20.25 L17.20,20.31 L16.93,20.37 L16.66,20.40 L16.39,20.42 L16.12,20.42 L15.84,20.39 L15.54,20.31 L15.39,20.58 L15.21,20.79 L15.02,20.99 L14.82,21.17 L14.60,21.33 L14.38,21.48 L14.14,21.62 L13.91,21.74 L13.66,21.85 L13.41,21.94 L13.15,22.01 L12.89,22.07 L12.63,22.12 L12.37,22.14 L12.10,22.15 L11.83,22.14 L11.57,22.12 L11.31,22.07 L11.05,22.01 L10.79,21.94 L10.54,21.85 L10.29,21.74 L10.06,21.62 L9.82,21.48 L9.60,21.33 L9.38,21.17 L9.18,20.99 L8.99,20.79 L8.81,20.58 L8.66,20.31 L8.36,20.39 L8.08,20.42 L7.81,20.42 L7.54,20.40 L7.27,20.37 L7.00,20.31 L6.74,20.25 L6.49,20.16 L6.24,20.07 L6.00,19.95 L5.76,19.83 L5.54,19.68 L5.32,19.53 L5.12,19.36 L4.92,19.18 L4.74,18.98 L4.57,18.78 L4.42,18.56 L4.27,18.34 L4.15,18.10 L4.03,17.86 L3.94,17.61 L3.85,17.36 L3.79,17.10 L3.73,16.83 L3.70,16.56 L3.68,16.29 L3.68,16.02 L3.71,15.74 L3.79,15.44 L3.52,15.29 L3.31,15.11 L3.11,14.92 L2.93,14.72 L2.77,14.50 L2.62,14.28 L2.48,14.04 L2.36,13.81 L2.25,13.56 L2.16,13.31 L2.09,13.05 L2.03,12.79 L1.98,12.53 L1.96,12.27 L1.95,12.00 L1.96,11.73 L1.98,11.47 L2.03,11.21 L2.09,10.95 L2.16,10.69 L2.25,10.44 L2.36,10.19 L2.48,9.96 L2.62,9.72 L2.77,9.50 L2.93,9.28 L3.11,9.08 L3.31,8.89 L3.52,8.71 L3.79,8.56 L3.71,8.26 L3.68,7.98 L3.68,7.71 L3.70,7.44 L3.73,7.17 L3.79,6.90 L3.85,6.64 L3.94,6.39 L4.03,6.14 L4.15,5.90 L4.27,5.66 L4.42,5.44 L4.57,5.22 L4.74,5.02 L4.92,4.82 L5.12,4.64 L5.32,4.47 L5.54,4.32 L5.76,4.17 L6.00,4.05 L6.24,3.93 L6.49,3.84 L6.74,3.75 L7.00,3.69 L7.27,3.63 L7.54,3.60 L7.81,3.58 L8.08,3.58 L8.36,3.61 L8.66,3.69 L8.81,3.42 L8.99,3.21 L9.18,3.01 L9.38,2.83 L9.60,2.67 L9.82,2.52 L10.06,2.38 L10.29,2.26 L10.54,2.15 L10.79,2.06 L11.05,1.99 L11.31,1.93 L11.57,1.88 L11.83,1.86 L12.10,1.85 L12.37,1.86 L12.63,1.88 L12.89,1.93 L13.15,1.99 L13.41,2.06 L13.66,2.15 L13.91,2.26 L14.14,2.38 L14.38,2.52 L14.60,2.67 L14.82,2.83 L15.02,3.01 L15.21,3.21 L15.39,3.42 L15.54,3.69 L15.84,3.61 L16.12,3.58 L16.39,3.58 L16.66,3.60 L16.93,3.63 L17.20,3.69 L17.46,3.75 L17.71,3.84 L17.96,3.93 L18.20,4.05 L18.44,4.17 L18.66,4.32 L18.88,4.47 L19.08,4.64 L19.28,4.82 L19.46,5.02 L19.63,5.22 L19.78,5.44 L19.93,5.66 L20.05,5.90 L20.17,6.14 L20.26,6.39 L20.35,6.64 L20.41,6.90 L20.47,7.17 L20.50,7.44 L20.52,7.71 L20.52,7.98 L20.49,8.26 L20.41,8.56 L20.68,8.71 L20.89,8.89 L21.09,9.08 L21.27,9.28 L21.43,9.50 L21.58,9.72 L21.72,9.96 L21.84,10.19 L21.95,10.44 L22.04,10.69 L22.11,10.95 L22.17,11.21 L22.22,11.47 L22.24,11.73Z" fill="none" stroke="#12b83e" stroke-width="1.8" stroke-linejoin="round"/><path d="M7.6 12.4l3 3 5.4-5.4" fill="none" stroke="#12b83e" stroke-width="1.8" stroke-linecap="round" stroke-linejoin="round"/></svg></span><span class="c cf">Conforme</span></div>
<div class="row" style="top:702px"><span class="c num">17</span><span class="c id">5.21</span><span class="c ex">Sécurité de l'information da...</span><span class="c de">Des processus et procédures d...</span><span class="app non">Non</span><span class="ci"><svg width="24" height="24" viewBox="0 0 24 24"><path d="M7.36 0.8h9.28l6.56 6.56v9.28l-6.56 6.56h-9.28l-6.56-6.56v-9.28z" fill="#ff2142"/><path d="M8.6 8.5l6.8 6.8M15.4 8.5l-6.8 6.8" stroke="#fff" stroke-width="2.1"/></svg></span><span class="c cf">Non conforme (majeur)</span></div>
<div class="row" style="top:734px"><span class="c num">18</span><span class="c id">5.20</span><span class="c ex">Accès des fournisseurs aux ...</span><span class="c de">Les exigences pertinentes en m...</span><span class="app non">Non</span><span class="ci"><svg width="24" height="24" viewBox="0 0 24 24"><path d="M7.75 1.75h8.5l6 6v8.5l-6 6h-8.5l-6-6v-8.5z" fill="none" stroke="#ff2142" stroke-width="1.5"/><path d="M8.4 8.4l7.2 7.2M15.6 8.4l-7.2 7.2" stroke="#ff2142" stroke-width="1.6"/></svg></span><span class="c cf">Non conforme (mineur)</span></div>
<div class="row" style="top:766px"><span class="c num">19</span><span class="c id">5.19</span><span class="c ex">Sécurité de l'information da...</span><span class="c de">Des processus et procédures d...</span><span class="app oui">Oui</span><span class="ci"><svg width="24" height="24" viewBox="0 0 24 24"><path d="M7.36 0.8h9.28l6.56 6.56v9.28l-6.56 6.56h-9.28l-6.56-6.56v-9.28z" fill="#ff2142"/><path d="M8.6 8.5l6.8 6.8M15.4 8.5l-6.8 6.8" stroke="#fff" stroke-width="2.1"/></svg></span><span class="c cf">Non conforme (majeur)</span></div>
<div class="row" style="top:798px"><span class="c num">20</span><span class="c id">5.18</span><span class="c ex">Collecte de preuves</span><span class="c de">Les droits d’accès aux informati...</span><span class="app oui">Oui</span></div>
<div class="row" style="top:830px"><span class="c num">21</span><span class="c id">5.17</span><span class="c ex">Gestion des événements de...</span><span class="c de">L’attribution et la gestion des inf...</span><span class="app non">Non</span><span class="ci"><svg width="24" height="24" viewBox="0 0 24 24"><path d="M7.36 0.8h9.28l6.56 6.56v9.28l-6.56 6.56h-9.28l-6.56-6.56v-9.28z" fill="#ff2142"/><path d="M8.6 8.5l6.8 6.8M15.4 8.5l-6.8 6.8" stroke="#fff" stroke-width="2.1"/></svg></span><span class="c cf">Non conforme (majeur)</span></div>
<div class="row" style="top:862px"><span class="c num">22</span><span class="c id">5.16</span><span class="c ex"></span><span class="c de"></span><span class="app oui">Oui</span></div>
</div>

</body></html>
